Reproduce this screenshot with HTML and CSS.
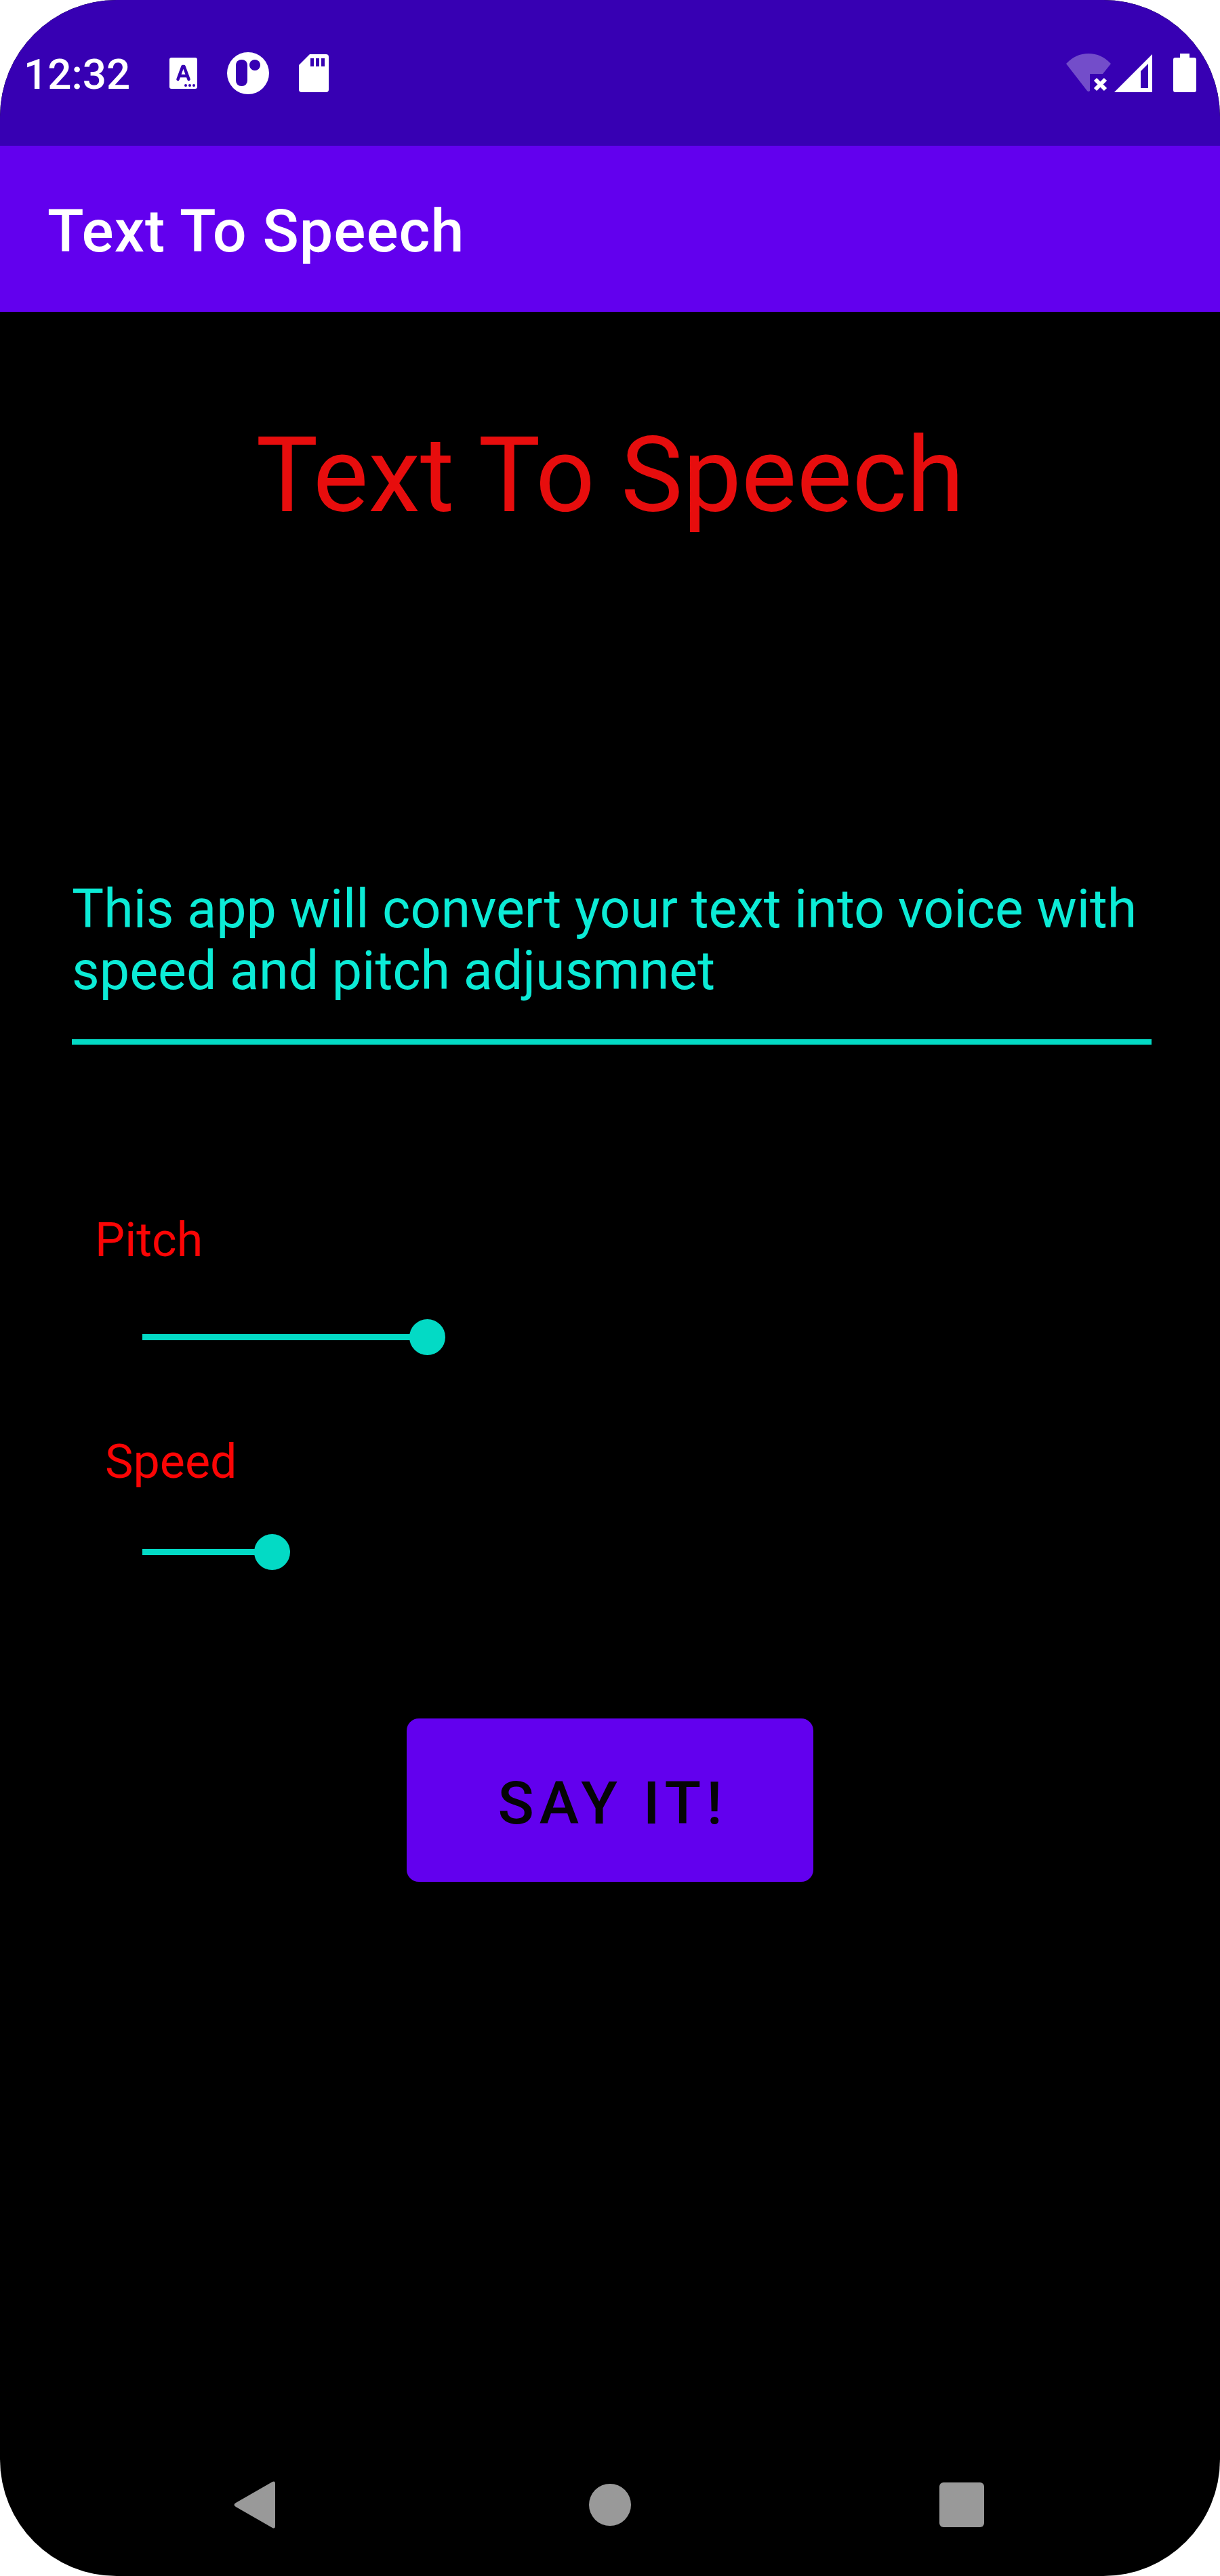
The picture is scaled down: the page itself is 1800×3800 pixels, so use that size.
FILE: index.html
```html
<!DOCTYPE html>
<html lang="en">
<head>
<meta charset="utf-8">
<meta name="viewport" content="width=device-width, initial-scale=1">
<title>Text To Speech</title>
<link rel="stylesheet" href="styles.css">
</head>
<body>
<div class="screen">
  <div class="status-bar">
    <time class="clock">12:32</time>
    <div class="notifications">
      <svg class="icon-keyboard" viewBox="0 0 41 46" aria-hidden="true">
        <rect width="41" height="46" rx="3" fill="#fff"/>
        <path d="M12.5 32 L19.5 13 H21.5 L28.5 32 M15 27 H26" fill="none" stroke="#3700b3" stroke-width="4.500" stroke-linecap="round" stroke-linejoin="round"/>
        <g fill="#3700b3"><circle cx="24" cy="41" r="2"/><circle cx="30" cy="41" r="2"/><circle cx="36" cy="41" r="2"/></g>
      </svg>
      <svg class="icon-round" viewBox="0 0 62 62" aria-hidden="true">
        <circle cx="31" cy="31" r="31" fill="#fff"/>
        <rect x="13" y="11" width="17" height="39" rx="8" fill="#3700b3"/>
        <circle cx="41" cy="19" r="8" fill="#3700b3"/>
      </svg>
      <svg class="icon-card" viewBox="0 0 44 56" aria-hidden="true">
        <path d="M16 0 H40 Q44 0 44 4 V52 Q44 56 40 56 H4 Q0 56 0 52 V16 Z" fill="#fff"/>
        <path d="M17 6 h5 v12 h-5z M25 6 h5 v12 h-5z M33 6 h5 v12 h-5z" fill="#3700b3"/>
      </svg>
    </div>
    <div class="system-icons">
      <svg class="icon-wifi" viewBox="0 0 66 57" aria-hidden="true">
        <path d="M0 15 Q14 0 33 0 Q52 0 66 15 L54 30 H35 V55 Q33 57 31 55 Z" fill="#fff" fill-opacity=".3"/>
        <path d="M43 38 L58 53 M58 38 L43 53" stroke="#fff" stroke-width="6"/>
      </svg>
      <svg class="icon-signal" viewBox="0 0 56 56" aria-hidden="true">
        <path d="M56 0 V56 H0 Z M50 14 L39 25 V50 H50 Z" fill="#fff" fill-rule="evenodd"/>
      </svg>
      <svg class="icon-battery" viewBox="0 0 34 57" aria-hidden="true">
        <path d="M10 0 H24 V6 H31 Q34 6 34 9 V54 Q34 57 31 57 H3 Q0 57 0 54 V9 Q0 6 3 6 H10 Z" fill="#fff"/>
      </svg>
    </div>
  </div>
  <header class="app-bar">
    <span class="app-title">Text To Speech</span>
  </header>
  <main class="content">
    <h1 class="heading">Text To Speech</h1>
    <textarea class="speech-text" rows="2" spellcheck="false" aria-label="Text to speak">This app will convert your text into voice with speed and pitch adjusmnet</textarea>
    <div class="control pitch">
      <label for="pitch">Pitch</label>
      <input id="pitch" class="slider" type="range" min="0" max="100" value="50" style="--fill: 50%">
    </div>
    <div class="control speed">
      <label for="speed">Speed</label>
      <input id="speed" class="slider" type="range" min="0" max="100" value="21" style="--fill: 21%">
    </div>
    <button class="say-button" type="button">SAY IT!</button>
  </main>
  <nav class="nav-bar" aria-label="System">
    <button type="button" aria-label="Back">
      <svg class="nav-icon" viewBox="0 0 70 70" aria-hidden="true"><path d="M3 32 L57 1 Q61 -1 61 4 V66 Q61 71 57 69 L3 38 Q-2 35 3 32 Z" fill="#999"/></svg>
    </button>
    <button type="button" aria-label="Home">
      <svg class="nav-icon" viewBox="0 0 70 70" aria-hidden="true"><circle cx="35" cy="35" r="31" fill="#999"/></svg>
    </button>
    <button type="button" aria-label="Recent apps">
      <svg class="nav-icon" viewBox="0 0 70 70" aria-hidden="true"><rect x="1" y="2" width="66" height="66" rx="6" fill="#999"/></svg>
    </button>
  </nav>
</div>
</body>
</html>
```

FILE: styles.css
```css
* {
  box-sizing: border-box;
}

body {
  margin: 0;
  background: #fff;
  font-family: Roboto, "Noto Sans", sans-serif;
}

svg {
  display: block;
}

.screen {
  display: flex;
  flex-direction: column;
  min-height: 100vh;
  border-radius: 172px;
  overflow: hidden;
  background: #000;
}

.status-bar {
  display: flex;
  align-items: center;
  height: 215px;
  padding: 0 35px;
  background: #3700b3;
  color: #fff;
}

.clock {
  padding-top: 4px;
  font-size: 62px;
  font-weight: 500;
  line-height: 72px;
}

.notifications {
  display: flex;
  align-items: center;
  gap: 44px;
  margin-left: 58px;
}

.system-icons {
  display: flex;
  align-items: center;
  margin-left: auto;
}

.icon-keyboard {
  width: 41px;
  height: 46px;
}

.icon-round {
  width: 62px;
  height: 62px;
}

.icon-card {
  width: 44px;
  height: 56px;
}

.icon-wifi {
  width: 66px;
  height: 57px;
}

.icon-signal {
  width: 56px;
  height: 56px;
  margin: 0 31px 0 5px;
}

.icon-battery {
  width: 34px;
  height: 57px;
}

.app-bar {
  display: flex;
  align-items: center;
  height: 245px;
  padding: 6px 70px 0;
  background: #6200ee;
  color: #fff;
}

.app-title {
  font-size: 88px;
  font-weight: 500;
  letter-spacing: 1px;
}

.content {
  display: flex;
  flex-direction: column;
  padding: 152px 0 0;
}

.heading {
  margin: 0 0 504px;
  color: #e70d0d;
  font-size: 154px;
  font-weight: 400;
  line-height: 180px;
  text-align: center;
}

.speech-text {
  display: block;
  margin: 0 101px 0 106px;
  padding: 0 0 55px;
  border: 0;
  border-bottom: 8px solid #03dac5;
  border-radius: 0;
  outline: 0;
  resize: none;
  overflow: hidden;
  background: transparent;
  color: #0cebd6;
  font-family: inherit;
  font-size: 79px;
  line-height: 91px;
}

.control {
  display: flex;
  flex-direction: column;
  padding: 0 140px;
  color: #fb0505;
  font-size: 70px;
  line-height: 82px;
}

.pitch {
  gap: 76px;
  margin-top: 247px;
}

.speed {
  gap: 66px;
  margin-top: 116px;
}

.speed label {
  padding-left: 15px;
}

.slider {
  appearance: none;
  width: 100%;
  max-width: 840px;
  height: 53px;
  margin: 0 70px;
  background: transparent;
}

.slider::-webkit-slider-runnable-track {
  height: 9px;
  background: linear-gradient(to right, #03dac5 var(--fill), transparent var(--fill));
}

.slider::-webkit-slider-thumb {
  appearance: none;
  width: 53px;
  height: 53px;
  margin-top: -22px;
  border-radius: 50%;
  background: #03dac5;
}

.say-button {
  align-self: center;
  width: 600px;
  height: 241px;
  margin-top: 219px;
  padding: 7px 0 0 8px;
  border: 0;
  border-radius: 18px;
  background: #6200ee;
  color: #050505;
  font-family: inherit;
  font-size: 88px;
  font-weight: 500;
  letter-spacing: 8px;
}

.nav-bar {
  display: flex;
  height: 210px;
  margin-top: auto;
  padding: 0 120px;
}

.nav-bar button {
  display: flex;
  flex: 1;
  align-items: center;
  justify-content: center;
  padding: 0;
  border: 0;
  background: transparent;
}

.nav-icon {
  width: 70px;
  height: 70px;
}
```
